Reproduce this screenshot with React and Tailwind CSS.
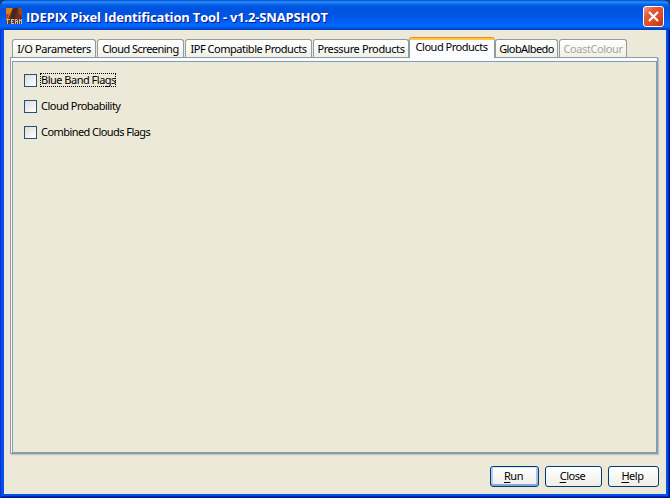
import React from "react";

const tabs = [
  { label: "I/O Parameters", box: "w-[84px] mr-px", text: "tracking-[-0.38px]" },
  { label: "Cloud Screening", box: "w-[87px] mr-px", text: "tracking-[-0.52px]" },
  { label: "IPF Compatible Products", box: "w-[127px] mr-px", text: "tracking-[-0.48px]" },
  { label: "Pressure Products", box: "w-[96px]", text: "tracking-[-0.38px]" },
  { label: "Cloud Products", box: "w-[86px]", text: "tracking-[-0.48px]", active: true },
  { label: "GlobAlbedo", box: "w-[63px] mr-px", text: "tracking-[-0.58px]" },
  { label: "CoastColour", box: "w-[68px]", text: "tracking-[-0.4px]", disabled: true },
];

const options = [
  { label: "Blue Band Flags", text: "tracking-[-0.5px]", focused: true },
  { label: "Cloud Probability", text: "tracking-[-0.52px]" },
  { label: "Combined Clouds Flags", text: "tracking-[-0.56px]" },
];

function BeamIcon() {
  return (
    <svg width="16" height="16" viewBox="0 0 16 16" className="block">
      <rect width="16" height="16" fill="#7a3217" />
      <path d="M0 0h7L5 4 2 11H0z" fill="#e07c1c" />
      <path d="M0 6h3L1 12H0z" fill="#a94c1c" />
      <path d="M7 0h5l-1 5 1 7H4z" fill="#4a2620" />
      <path d="M12 0h4v8l-3-2z" fill="#9a4524" />
      <path d="M10 4l4 3 1 5H9z" fill="#6b2d1c" />
      <path d="M0 11h16v5H0z" fill="#5b3a31" />
      <path
        d="M0 11.5h4M1.5 12v4M5 11.5h3M5.5 11v5M5 13.5h2M5 15.5h3M9.5 16v-4M9 11.5h2M11.5 12v4M9 13.5h3M13.5 16v-5M15.5 16v-5M14 12.5h1"
        stroke="#c9b8ae"
        fill="none"
      />
    </svg>
  );
}

function Tab({ label, box, text, active, disabled }) {
  if (active) {
    return (
      <div className={`relative z-10 -mb-px flex h-[21px] shrink-0 justify-center overflow-hidden rounded-t-[3px] border-x border-[#919b9c] bg-[#fcfcfe] ${box}`}>
        <div className="absolute inset-x-0 top-0 h-[3px] border-t border-[#e68b2c] bg-[#ffc73c]" />
        <span className={`pt-[2px] pr-px leading-[15px] ${text}`}>{label}</span>
      </div>
    );
  }
  return (
    <div
      className={`flex h-[18px] shrink-0 justify-center rounded-t-[3px] border-x border-t border-[#919b9c] bg-linear-to-b from-white to-[#f0f0ea] ${box} ${disabled ? "text-[#a7a799]" : ""}`}
    >
      <span className={`pt-px leading-[15px] ${text}`}>{label}</span>
    </div>
  );
}

function Button({ label, box, primary }) {
  return (
    <button
      className={`flex h-[21px] justify-center rounded-[3px] border border-[#003c74] bg-linear-to-b from-white to-[#efeee8] leading-[18px] ${box} ${
        primary ? "shadow-[inset_0_1px_0_#cee7ff,inset_0_-2px_0_#86a7e5,inset_2px_0_0_#b3ccf5,inset_-2px_0_0_#a5c0f0]" : ""
      }`}
    >
      <span className="pr-0.5 tracking-[-0.45px]">
        <span className="underline underline-offset-2">{label[0]}</span>
        {label.slice(1)}
      </span>
    </button>
  );
}

export default function App() {
  return (
    <div className="h-[498px] w-[670px] overflow-hidden bg-[#123c6b] font-['Noto_Sans',sans-serif] text-[11px] text-black">
      <div className="flex h-full flex-col rounded-t-[7px] bg-[#0550e8] shadow-[inset_1px_0_0_#0831d9,inset_-1px_0_0_#00138c,inset_-2px_0_0_#0029ba,inset_0_-1px_0_#00138c,inset_0_-2px_0_#0029ba]">
        <header className="flex h-[30px] shrink-0 items-start rounded-t-[7px] bg-[linear-gradient(180deg,#0958c6_0px,#0864e0_1px,#3c91ff_2px,#147bfa_3px,#0560e6_5px,#0053dd_8px,#0054e1_14px,#005bf0_20px,#0066ff_24px,#0062fa_27px,#0046c6_29px,#003dba_30px)] pl-1.5">
          <div className="mt-2">
            <BeamIcon />
          </div>
          <h1 className="mt-2 ml-1 whitespace-nowrap font-['Open_Sans',sans-serif] text-[13px] leading-[19px] font-bold tracking-[-0.18px] text-white [text-shadow:1px_1px_0_#0a1883]">
            IDEPIX Pixel Identification Tool - v1.2-SNAPSHOT
          </h1>
          <button className="mt-1.5 mr-1.5 ml-auto flex h-[21px] w-[21px] items-center justify-center rounded-[3px] border border-white bg-[linear-gradient(135deg,#f0a08a_0%,#e35b39_30%,#dd4a24_65%,#b93412_100%)]">
            <svg width="13" height="13" viewBox="0 0 13 13">
              <path d="M2 2l9 9M11 2l-9 9" stroke="white" strokeWidth="2.2" />
            </svg>
          </button>
        </header>

        <main className="mx-1 mb-1 flex min-h-0 flex-1 flex-col bg-[#ece9d8] pt-[7px] pr-[7px] pl-1.5">
          <nav className="flex h-5 shrink-0 items-end pl-0.5 whitespace-nowrap">
            {tabs.map((tab) => (
              <Tab key={tab.label} {...tab} />
            ))}
          </nav>
          <section className="flex h-[397px] w-[648px] shrink-0 flex-col border border-[#919b9c] border-r-[#7f9db9] border-b-[#869cab] bg-[#fcfcfe] pt-[3px] pl-px shadow-[1px_1px_1px_#c8c5b5]">
            <div className="flex flex-1 flex-col gap-[11px] border border-[#7f9db9] bg-[#ece9d8] pt-[11px] pl-[11px]">
              {options.map(({ label, text, focused }) => (
                <label key={label} className="flex h-[15px] items-start">
                  <span className="mt-px h-[13px] w-[13px] border border-[#1c5180] bg-linear-to-br from-[#dcdcd7] to-white" />
                  <span
                    className={`ml-[3px] h-[14px] pl-px whitespace-nowrap leading-[13px] ${text} ${
                      focused ? "outline-1 outline-dotted outline-black -outline-offset-1" : ""
                    }`}
                  >
                    {label}
                  </span>
                </label>
              ))}
            </div>
          </section>
          <footer className="mt-3 flex justify-end gap-1.5">
            <Button label="Run" box="w-[49px]" primary />
            <Button label="Close" box="w-[57px]" />
            <Button label="Help" box="w-[51px]" />
          </footer>
        </main>
      </div>
    </div>
  );
}
